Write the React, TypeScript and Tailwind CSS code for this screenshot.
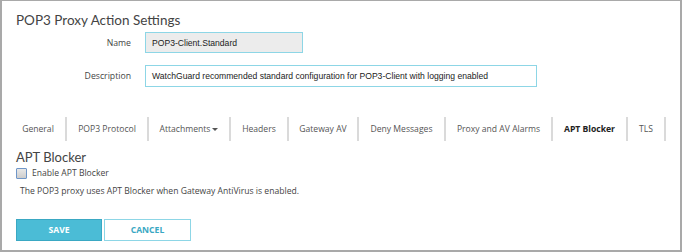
import React from "react";

const tabs: { label: string; w: string }[] = [
  { label: "General", w: "w-[56px]" },
  { label: "POP3 Protocol", w: "w-[82px]" },
  { label: "Attachments", w: "w-[82px]" },
  { label: "Headers", w: "w-[58px]" },
  { label: "Gateway AV", w: "w-[70px]" },
  { label: "Deny Messages", w: "w-[87px]" },
  { label: "Proxy and AV Alarms", w: "w-[107px]" },
  { label: "APT Blocker", w: "w-[75px]" },
  { label: "TLS", w: "w-[38px]" },
];

export default function App() {
  return (
    <div className="w-[682px] h-[252px] overflow-hidden bg-white">
      <div
        className="h-[252px] w-[682px] border-t border-l-2 border-r-2 border-b-2 border-[#a9a9a9] bg-white text-[#444] flex flex-col whitespace-nowrap"
        style={{ fontFamily: '"Open Sans", sans-serif' }}
      >
        <div
          className="ml-[14px] mt-[9px] h-[20px] text-[13.5px] leading-[20px] text-[#444]"
          style={{ fontFamily: "Lato, sans-serif" }}
        >
          POP3 Proxy Action Settings
        </div>
        <div className="mt-[2px] h-[21px] flex items-center">
          <div className="w-[129px] text-right text-[8.7px] leading-[12px]">Name</div>
          <div
            className="ml-[14px] w-[158px] h-[21px] border border-[#8dd6e6] bg-[#ececec] flex items-center pl-[6px] text-[8.6px] leading-[12px] text-[#222]"
            style={{ fontFamily: '"Liberation Sans", Arial, sans-serif' }}
          >
            POP3-Client.Standard
          </div>
        </div>
        <div className="mt-[12px] h-[22px] flex items-center">
          <div className="w-[129px] text-right text-[8.7px] leading-[12px]">Description</div>
          <div
            className="ml-[14px] w-[392px] h-[22px] border border-[#8dd6e6] bg-white flex items-center pl-[6px] text-[8.6px] leading-[12px] text-[#222]"
            style={{ fontFamily: '"Liberation Sans", Arial, sans-serif' }}
          >
            WatchGuard recommended standard configuration for POP3-Client with logging enabled
          </div>
        </div>
        <div className="mt-[30px] ml-[9px] flex h-[24px] items-stretch">
          {tabs.map((t) => (
            <div
              key={t.label}
              className={`${t.w} flex items-center justify-center text-[8.6px] leading-[12px] border-r-2 border-[#dadada] ${
                t.label === "APT Blocker" ? "font-bold text-[#222]" : "text-[#555]"
              }`}
            >
              {t.label}
              {t.label === "Attachments" && (
                <svg width="6" height="3" viewBox="0 0 6 3" className="ml-[2px]">
                  <path d="M0 0 L6 0 L3 3 Z" fill="#555" />
                </svg>
              )}
            </div>
          ))}
        </div>
        <div
          className="ml-[14px] mt-[7px] h-[18px] text-[13px] leading-[18px] text-[#444]"
          style={{ fontFamily: "Lato, sans-serif" }}
        >
          APT Blocker
        </div>
        <div className="ml-[14px] mt-[1px] h-[12px] flex items-center">
          <div className="w-[11px] h-[11px] border border-[#6f96c8] bg-gradient-to-b from-[#e8e8e8] to-[#cdcdcd] rounded-[1px]" />
          <span className="ml-[5px] text-[8.6px] leading-[12px] text-[#444]">Enable APT Blocker</span>
        </div>
        <div className="ml-[18px] mt-[6px] h-[12px] leading-[12px] text-[8.6px] text-[#444]">
          The POP3 proxy uses APT Blocker when Gateway AntiVirus is enabled.
        </div>
        <div className="ml-[14px] mt-[22px] flex gap-[2px]">
          <div className="w-[86px] h-[22px] flex items-center justify-center bg-[#4bbcd6] border border-[#3aa8c3] text-white text-[8.6px] leading-[12px] font-bold">
            SAVE
          </div>
          <div className="w-[87px] h-[22px] flex items-center justify-center bg-white border border-[#8dd6e6] text-[#3aa8c3] text-[8.6px] leading-[12px] font-bold">
            CANCEL
          </div>
        </div>
      </div>
    </div>
  );
}
